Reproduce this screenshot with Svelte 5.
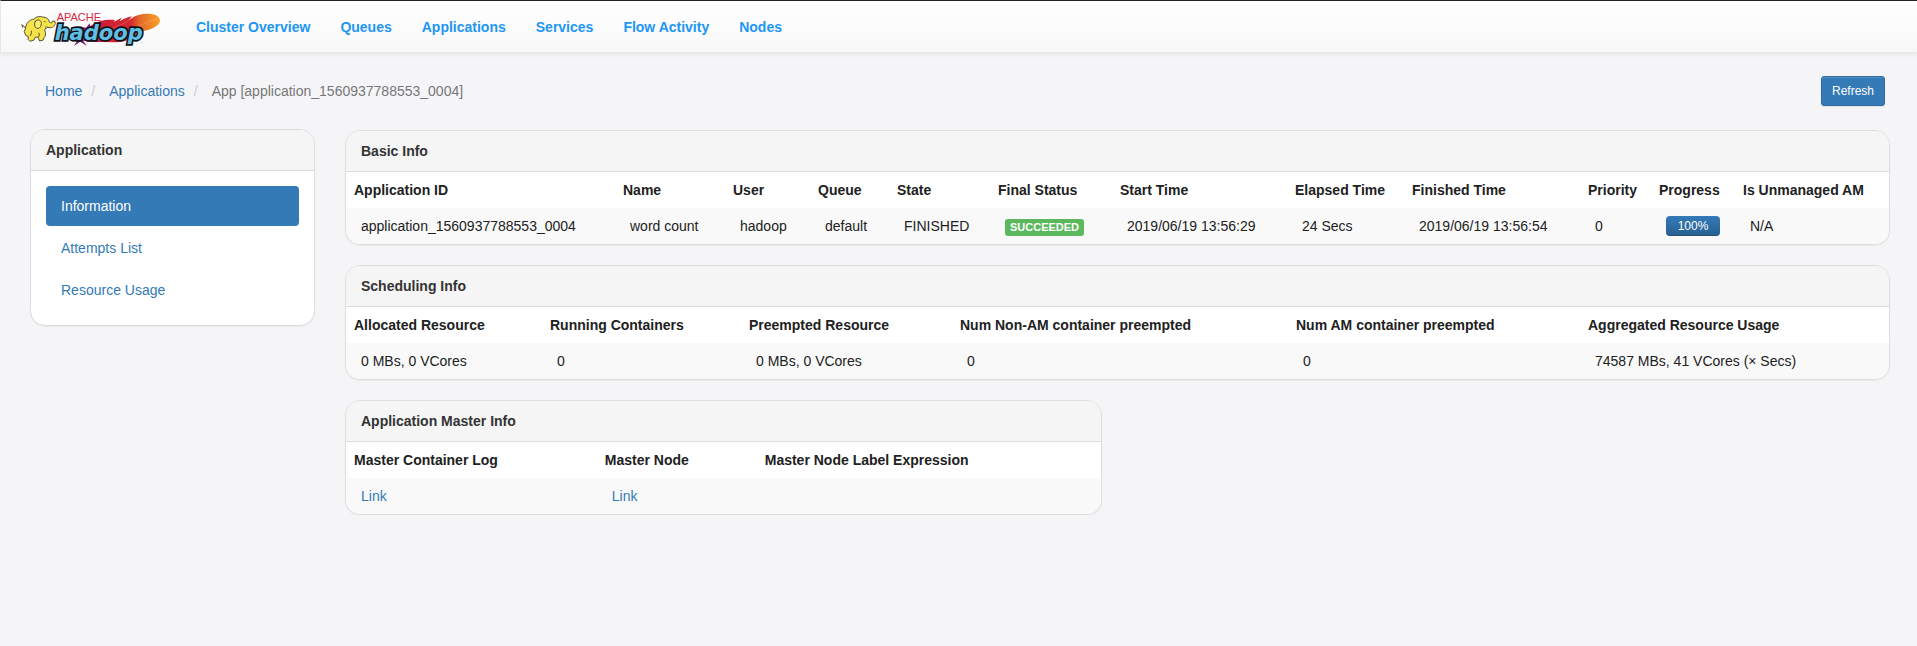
<script>
  const nav = ['Cluster Overview', 'Queues', 'Applications', 'Services', 'Flow Activity', 'Nodes'];
  const menu = ['Information', 'Attempts List', 'Resource Usage'];

  const panels = [
    {
      title: 'Basic Info',
      columns: [
        { name: 'Application ID', value: 'application_1560937788553_0004', share: 269 },
        { name: 'Name', value: 'word count', share: 110 },
        { name: 'User', value: 'hadoop', share: 85 },
        { name: 'Queue', value: 'default', share: 79 },
        { name: 'State', value: 'FINISHED', share: 101 },
        { name: 'Final Status', value: 'SUCCEEDED', share: 122, kind: 'label' },
        { name: 'Start Time', value: '2019/06/19 13:56:29', share: 175 },
        { name: 'Elapsed Time', value: '24 Secs', share: 117 },
        { name: 'Finished Time', value: '2019/06/19 13:56:54', share: 176 },
        { name: 'Priority', value: '0', share: 71 },
        { name: 'Progress', value: '100%', share: 84, kind: 'progress' },
        { name: 'Is Unmanaged AM', value: 'N/A', share: 154 }
      ]
    },
    {
      title: 'Scheduling Info',
      columns: [
        { name: 'Allocated Resource', value: '0 MBs, 0 VCores', share: 196 },
        { name: 'Running Containers', value: '0', share: 199 },
        { name: 'Preempted Resource', value: '0 MBs, 0 VCores', share: 211 },
        { name: 'Num Non-AM container preempted', value: '0', share: 336 },
        { name: 'Num AM container preempted', value: '0', share: 292 },
        { name: 'Aggregated Resource Usage', value: '74587 MBs, 41 VCores (× Secs)', share: 309 }
      ]
    },
    {
      title: 'Application Master Info',
      half: true,
      columns: [
        { name: 'Master Container Log', value: 'Link', share: 251, kind: 'link' },
        { name: 'Master Node', value: 'Link', share: 160, kind: 'link' },
        { name: 'Master Node Label Expression', value: '', share: 344 }
      ]
    }
  ];

  const total = (columns) => columns.reduce((sum, c) => sum + c.share, 0);
</script>

<header class="navbar">
  <a class="brand" href="#home" aria-label="Apache Hadoop">
    <svg class="logo" viewBox="60 30 426 117" role="img" aria-hidden="true">
      <defs>
        <linearGradient id="feather" x1="220" y1="0" x2="480" y2="0" gradientUnits="userSpaceOnUse">
          <stop offset="0" stop-color="#68308b" />
          <stop offset="0.22" stop-color="#a3195b" />
          <stop offset="0.36" stop-color="#d01f36" />
          <stop offset="0.66" stop-color="#d4282f" />
          <stop offset="0.76" stop-color="#e4662a" />
          <stop offset="1" stop-color="#f9a126" />
        </linearGradient>
      </defs>
      <path fill="url(#feather)" d="M222 138L231 123L217 118L240 113L246 90L237 78L258 83L269 70L271 79C292 62 319 58 345 60L341 66L365 53L359 64C371 57 382 51 395 49L387 61C404 44 433 40 455 42C472 45 481 53 480 64C476 80 450 92 421 94C407 112 379 127 347 127L267 125L250 122L260 138L241 125Z" />
      <path fill="none" stroke="#fff" stroke-opacity="0.35" stroke-width="1.5" d="M333 87Q370 73 401 52M413 78Q443 68 472 55" />
      <g stroke="#3a3620" stroke-width="2.5" stroke-linejoin="round" stroke-linecap="round">
        <path fill="none" d="M78 86Q72 76 66 75M66 75L68 82" />
        <path fill="#f5e34b" d="M76 86C78 70 87 59 103 57C107 50 118 48 128 51C139 51 147 57 148 66C153 71 158 68 157 63L165 64C168 73 161 83 151 83L140 82L134 90C139 101 136 111 132 113L130 120L119 123L114 112L106 111L102 120L90 124L84 118L85 110L77 106L73 95Z" />
        <path fill="#f9ed6e" d="M106 64C113 55 125 60 124 71C123 83 115 88 109 84C103 80 102 71 106 64Z" />
        <path fill="none" d="M91 107Q96 101 94 93M116 111Q120 105 117 99M134 64L135 66" />
      </g>
      <path fill="#fff" d="M136 80L143 81L139 86Z" stroke="#3a3620" stroke-width="1.5" />
      <text class="apache" x="170" y="62">APACHE</text>
      <text class="wordmark" x="164" y="121">hadoop</text>
      <circle cx="426" cy="128" r="2" fill="#8ed6ef" />
    </svg>
  </a>
  <nav>
    {#each nav as item}
      <a href="#nav">{item}</a>
    {/each}
  </nav>
</header>

<div class="toolbar">
  <ol class="breadcrumb">
    <li><a href="#home">Home</a></li>
    <li><a href="#applications">Applications</a></li>
    <li>App [application_1560937788553_0004]</li>
  </ol>
  <button type="button">Refresh</button>
</div>

<div class="layout">
  <aside class="panel">
    <h2>Application</h2>
    <ul class="menu">
      {#each menu as item, i}
        <li><a href="#menu" class:active={i === 0}>{item}</a></li>
      {/each}
    </ul>
  </aside>

  <main>
    {#each panels as panel}
      <section class="panel" class:half={panel.half}>
        <h2>{panel.title}</h2>
        <table>
          <colgroup>
            {#each panel.columns as column}
              <col style="width: {(column.share / total(panel.columns)) * 100}%" />
            {/each}
          </colgroup>
          <thead>
            <tr>
              {#each panel.columns as column}
                <th scope="col">{column.name}</th>
              {/each}
            </tr>
          </thead>
          <tbody>
            <tr>
              {#each panel.columns as column}
                <td>
                  {#if column.kind === 'label'}
                    <span class="label">{column.value}</span>
                  {:else if column.kind === 'progress'}
                    <div class="progress">{column.value}</div>
                  {:else if column.kind === 'link'}
                    <a href="#link">{column.value}</a>
                  {:else}
                    {column.value}
                  {/if}
                </td>
              {/each}
            </tr>
          </tbody>
        </table>
      </section>
    {/each}
  </main>
</div>

<style>
  :global(body) {
    background: #f5f5f8;
    color: #212121;
    font: 14px/20px "Liberation Sans", Arial, sans-serif;
  }

  :global(*) {
    box-sizing: border-box;
  }

  a {
    color: #337ab7;
    text-decoration: none;
  }

  .navbar {
    display: flex;
    align-items: center;
    height: 53px;
    padding: 0 19px;
    border-top: 1px solid #222;
    border-left: 1px solid #e7e7e7;
    border-bottom: 1px solid #e7e7e7;
    background: linear-gradient(#fff, #f8f8f8);
    box-shadow: 0 1px 5px rgba(0, 0, 0, 0.08);
  }

  .brand {
    display: block;
    margin-right: 19px;
    padding-top: 6px;
  }

  .logo {
    display: block;
    width: 142px;
    height: 39px;
  }

  .apache {
    font: 33px "Liberation Sans", Arial, sans-serif;
    fill: #d9273f;
  }

  .wordmark {
    font: italic bold 63px "DejaVu Sans", Verdana, sans-serif;
    fill: #60bfe4;
    stroke: #10141a;
    stroke-width: 10px;
    stroke-linejoin: miter;
    paint-order: stroke;
  }

  nav {
    display: flex;
  }

  nav a {
    padding: 15px;
    color: #2196f3;
    font-weight: bold;
    white-space: nowrap;
  }

  .toolbar {
    display: flex;
    align-items: center;
    justify-content: space-between;
    padding: 23px 32px 23px 45px;
  }

  .breadcrumb {
    display: flex;
    margin: 0;
    padding: 0;
    list-style: none;
    color: #777;
  }

  .breadcrumb li + li::before {
    content: "/";
    padding: 0 14px 0 9px;
    color: #ccc;
  }

  button {
    padding: 5px 10px;
    border: 1px solid #2e6da4;
    border-radius: 3px;
    background: #337ab7;
    box-shadow: inset 0 1px 0 rgba(255, 255, 255, 0.15), 0 1px 1px rgba(0, 0, 0, 0.08);
    color: #fff;
    font: 12px/18px "Liberation Sans", Arial, sans-serif;
  }

  .layout {
    display: grid;
    grid-template-columns: repeat(12, minmax(0, 1fr));
    column-gap: 30px;
    align-items: start;
    padding: 0 27px 0 30px;
  }

  .panel {
    overflow: hidden;
    border: 1px solid #ddd;
    border-radius: 15px;
    background: #fff;
    box-shadow: 0 1px 1px rgba(0, 0, 0, 0.05);
  }

  aside {
    grid-column: span 2;
  }

  main {
    display: flex;
    flex-direction: column;
    grid-column: span 10;
    gap: 20px;
    padding-top: 1px;
  }

  .half {
    width: calc(50% - 16px);
  }

  h2 {
    margin: 0;
    padding: 10px 15px;
    border-bottom: 1px solid #ddd;
    background: #f5f5f5;
    color: #333;
    font-size: 14px;
    line-height: 20px;
  }

  .menu {
    display: flex;
    flex-direction: column;
    gap: 2px;
    margin: 0;
    padding: 15px;
    list-style: none;
  }

  .menu a {
    display: block;
    padding: 10px 15px;
    border-radius: 4px;
  }

  .menu .active {
    background: #337ab7;
    color: #fff;
  }

  table {
    width: 100%;
    border-collapse: collapse;
    table-layout: fixed;
  }

  th {
    padding: 8px;
    text-align: left;
    white-space: nowrap;
  }

  td {
    height: 36px;
    padding: 8px 15px;
    background: #f9f9f9;
    white-space: nowrap;
  }

  .label {
    display: block;
    width: max-content;
    margin-top: 3px;
    padding: 2px 5px;
    border-radius: 3px;
    background: #5cb85c;
    color: #fff;
    font-size: 11px;
    font-weight: bold;
    line-height: 13px;
  }

  .progress {
    border-radius: 4px;
    background: linear-gradient(#337ab7, #286090);
    box-shadow: inset 0 -1px 0 rgba(0, 0, 0, 0.15);
    color: #fff;
    font-size: 12px;
    text-align: center;
  }
</style>
